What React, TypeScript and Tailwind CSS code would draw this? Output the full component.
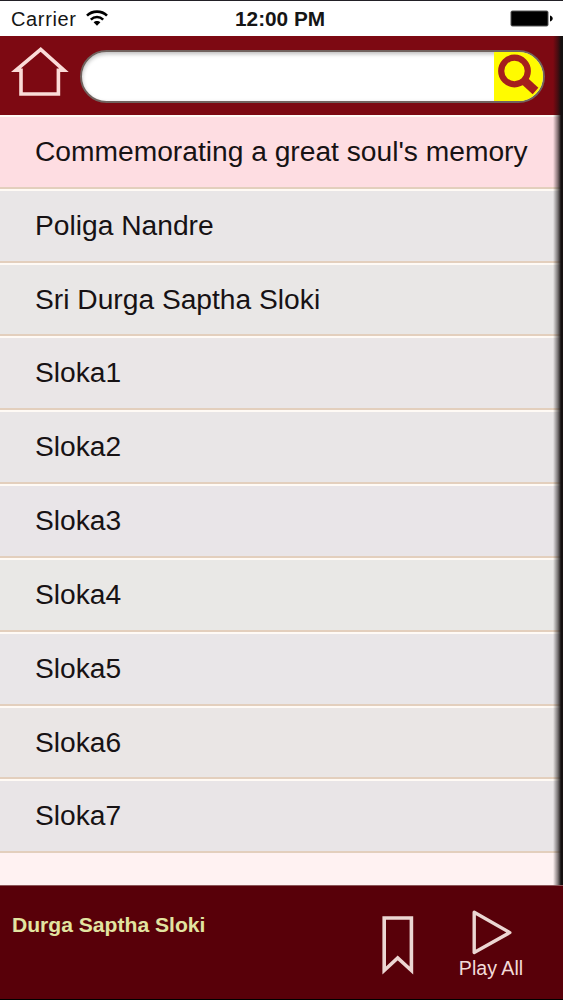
type Track = {
  title: string;
  color: string;
};

const tracks: Track[] = [
  { title: "Commemorating a great soul's memory", color: "bg-[#fedde2]" },
  { title: "Poliga Nandre", color: "bg-[#e9e6e7]" },
  { title: "Sri Durga Saptha Sloki", color: "bg-[#e9e7e6]" },
  { title: "Sloka1", color: "bg-[#eae6e7]" },
  { title: "Sloka2", color: "bg-[#e9e6e7]" },
  { title: "Sloka3", color: "bg-[#e9e5e8]" },
  { title: "Sloka4", color: "bg-[#e9e8e6]" },
  { title: "Sloka5", color: "bg-[#e9e6e8]" },
  { title: "Sloka6", color: "bg-[#eae6e5]" },
  { title: "Sloka7", color: "bg-[#e9e5e7]" },
];

function StatusBar() {
  return (
    <div className="flex h-9 shrink-0 items-center justify-between border-t border-[#222026] bg-white pt-px pr-[10px] pl-[11px] text-[#151515]">
      <div className="flex w-[224px] items-center gap-[9px]">
        <span className="text-[20px] leading-none tracking-[0.65px]">
          Carrier
        </span>
        <svg
          className="-mt-px h-[17px] w-[22px]"
          viewBox="0 0 22 17"
          fill="none"
          stroke="black"
          strokeWidth="2.6"
        >
          <path d="M1 5.6C6.4.3 15.6.3 21 5.6" />
          <path d="M4.8 9.6C8.4 6.2 13.6 6.2 17.2 9.6" />
          <path
            d="M11 15.8 7.6 12.2C9.4 10.5 12.6 10.5 14.4 12.2Z"
            fill="black"
            stroke="none"
          />
        </svg>
      </div>
      <span className="flex-1 text-[20.8px] leading-none font-bold whitespace-nowrap">
        12:00 PM
      </span>
      <svg className="-mt-px h-[17px] w-[43px]" viewBox="0 0 43 17">
        <rect x="0.5" y="0.5" width="38" height="16" rx="2" fill="#555" />
        <rect x="1.5" y="1.5" width="36" height="14" rx="1" fill="black" />
        <path d="M40 5.5C43.6 6.4 43.6 10.6 40 11.5Z" fill="black" />
      </svg>
    </div>
  );
}

function Header() {
  return (
    <header className="flex h-[79px] shrink-0 items-start bg-[#7d0912] pt-[9px] pl-[11px]">
      <button aria-label="Home">
        <svg
          className="h-[54px] w-[58px]"
          viewBox="0 0 58 54"
          fill="none"
          stroke="#fbdcd8"
          strokeWidth="3.6"
        >
          <path d="M10 25.3H4.8L29.7 4.4 53 25.3H47.4V49H10Z" />
        </svg>
      </button>
      <div className="mt-[5px] ml-[11px] flex h-[53px] w-[465px] overflow-hidden rounded-full border-2 border-[#71635f] bg-white shadow-[inset_0_2px_4px_#bbb]">
        <input
          className="min-w-0 flex-1 bg-transparent px-6 text-2xl outline-none"
          aria-label="Search"
        />
        <button
          className="h-full w-[49px] shrink-0 bg-[#fffb00]"
          aria-label="Submit search"
        >
          <svg
            className="h-[49px] w-[49px]"
            viewBox="0 0 49 49"
            fill="none"
            stroke="#a51f1d"
          >
            <circle cx="20.5" cy="19" r="13.3" strokeWidth="6.2" />
            <path d="M29.5 28 41.5 39" strokeWidth="8.5" />
          </svg>
        </button>
      </div>
    </header>
  );
}

function TrackRow({ title, color }: Track) {
  return (
    <li
      className={`flex h-[73.82px] items-center border-t-2 border-b-2 border-t-[#fffaf5] border-b-[#e3cfbd] pb-[1.6px] pl-[35px] ${color}`}
    >
      <span className="text-[28.2px] leading-none whitespace-nowrap text-[#171214]">
        {title}
      </span>
    </li>
  );
}

function Footer() {
  return (
    <footer className="flex h-[115px] shrink-0 items-start border-t border-b border-t-[#8b5558] border-b-black bg-[#580009]">
      <h1 className="mt-[27px] ml-[12px] w-[369px] text-[21.1px] leading-6 font-bold text-[#e2e4a1]">
        Durga Saptha Sloki
      </h1>
      <button className="mt-[29px] w-[33px]" aria-label="Bookmark">
        <svg
          className="h-[60px] w-[33px]"
          viewBox="0 0 33 60"
          fill="none"
          stroke="#ecd6d3"
          strokeWidth="3.6"
        >
          <path d="M3.2 3H30.4V55.5L16.7 43 3.2 55.5Z" />
        </svg>
      </button>
      <button className="mt-[23px] ml-[37px] flex w-20 flex-col items-center text-[#f3dad8]">
        <svg
          className="h-[46px] w-[42px]"
          viewBox="0 0 42 46"
          fill="none"
          stroke="#ecd6d3"
          strokeWidth="3.4"
          strokeLinejoin="round"
        >
          <path d="M4.2 3.2 39.8 23.6 4.2 43.5Z" />
        </svg>
        <span className="mt-px text-[19.6px] leading-6 whitespace-nowrap">
          Play All
        </span>
      </button>
    </footer>
  );
}

export default function App() {
  return (
    <div className="flex h-[1000px] w-[563px] flex-col overflow-hidden bg-white font-['Liberation_Sans',Arial,sans-serif]">
      <StatusBar />
      <div className="relative flex min-h-0 flex-1 flex-col">
        <Header />
        <main className="min-h-0 flex-1 overflow-hidden bg-[#fff2f2]">
          <ul>
            {tracks.map((track) => (
              <TrackRow key={track.title} {...track} />
            ))}
          </ul>
        </main>
        <div className="pointer-events-none absolute inset-y-0 right-0 w-[10px] bg-linear-to-r from-transparent via-[#151010]/55 to-[#151010] to-80%" />
      </div>
      <Footer />
    </div>
  );
}
